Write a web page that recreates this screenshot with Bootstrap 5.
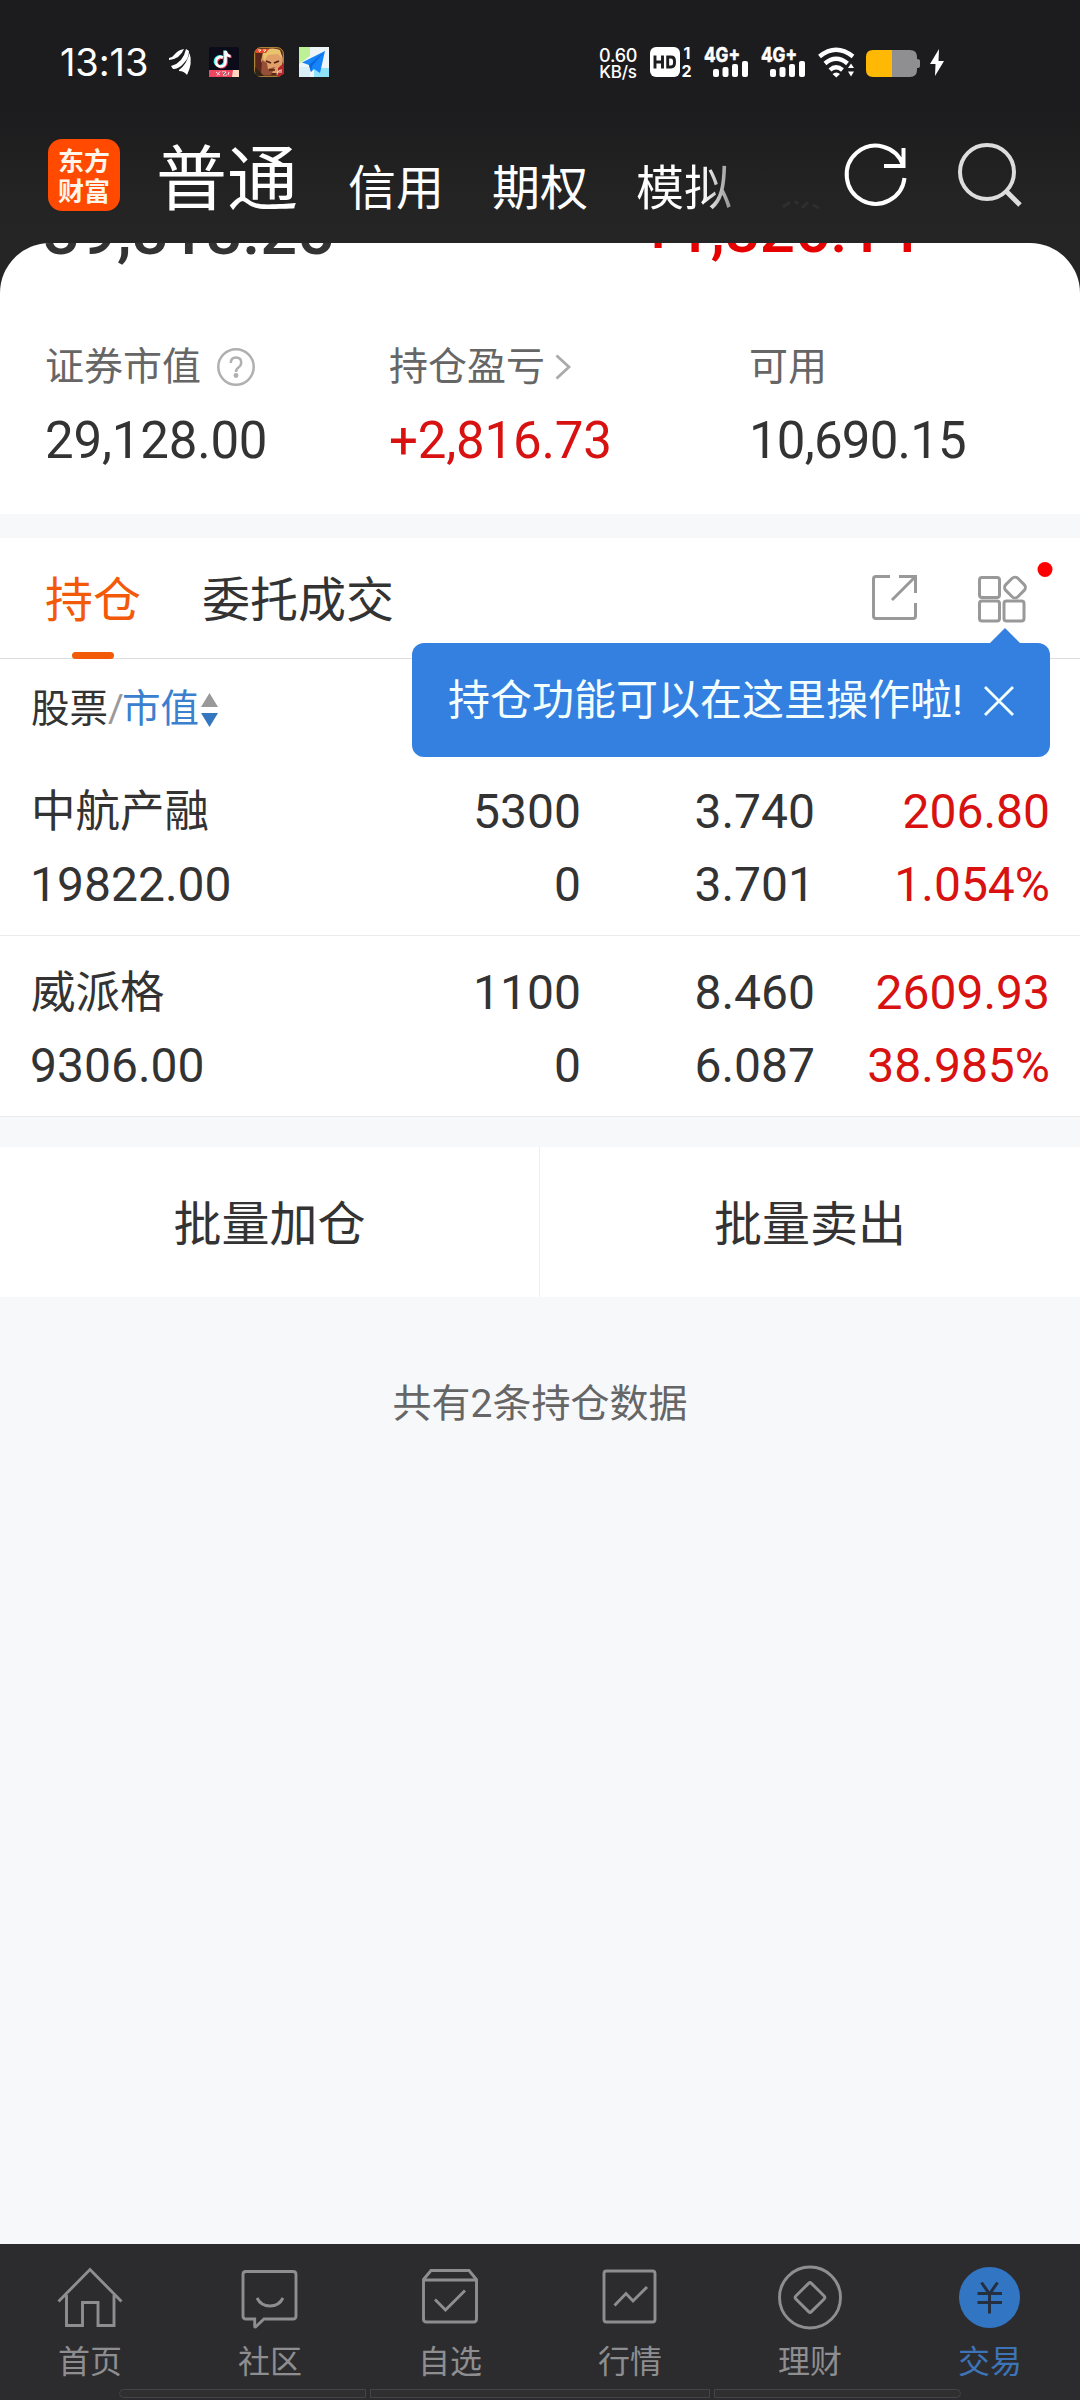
<!DOCTYPE html>
<html lang="zh-CN">
<head>
<meta charset="utf-8">
<meta name="viewport" content="width=device-width, initial-scale=1">
<title>交易 - 持仓</title>
<link href="https://cdn.jsdelivr.net/npm/bootstrap@5.3.0/dist/css/bootstrap.min.css" rel="stylesheet">
<style>
  body{width:1080px;height:2400px;overflow:hidden;background:#f7f8fa;color:#333;font-family:Roboto,"Noto Sans CJK SC",sans-serif;font-size:48px;line-height:1}
  svg{display:block;flex:none;overflow:visible}
  .app-top{height:243px;background:linear-gradient(#1c1c1e 0,#1c1c1e 110px,#232323 190px,#252525 243px);color:#fff}
  .status-row{height:88px;padding:37px 136px 0 60px}
  .clock{font:400 38px/50px Inter,sans-serif;letter-spacing:-.1px;width:109px}
  .net-speed{width:38px;font:500 17px/17px Inter,sans-serif;letter-spacing:-.2px;margin-right:13px}
  .net-speed div:first-child{font-size:18px}
  .title-row{height:155px;padding:0 58px 0 48px}
  .brand{width:72px;height:72px;border-radius:14px;background:#ff4a00;margin-top:51px;padding-top:6px;font:700 26px/30px "Noto Sans CJK SC",sans-serif;color:#fff5ea}
  .main-tab{font-size:71px;line-height:80px;margin:52px 0 0 36px;width:142px}
  .sub-tab{font-size:48px;line-height:60px;margin-top:71px;width:144px}
  .fade-out{background:linear-gradient(90deg,#fff 66px,#888 98px);-webkit-background-clip:text;background-clip:text;color:transparent}
  .sheet-wrap{background:#252525;height:271px}
  .sheet{height:271px;border-radius:50px 50px 0 0;overflow:hidden;background:#fff}
  .totals{height:61px;padding-left:43px;font-weight:500}
  .totals .asset{width:598px;font-size:65px;line-height:60px;margin-top:-41px}
  .totals .today{font-size:62px;line-height:60px;margin-top:-42px}
  .up{color:#d81111}.today{color:#e60000}
  .metric-label{font-size:39px;line-height:50px;color:#666;margin-top:38px;height:50px}
  .metric-value{font-size:51px;line-height:60px;margin-top:19px;letter-spacing:-.2px}
  .m1{width:344px}.m2{width:360px}
  .m3 .metric-value{letter-spacing:-.8px}
  .tabbar{margin-top:24px;height:121px;border-bottom:1px solid #ddd;padding:0 51px 0 45px}
  .tab-on{color:#f25a0a}
  .tab-on::after{content:"";position:absolute;left:27px;bottom:-1px;width:42px;height:7px;border-radius:4px;background:#f25a0a}
  .tab-item{line-height:126px;height:120px;margin-right:61px}
  .hint{top:643px;left:412px;width:638px;height:114px;border-radius:12px;background:#3480e1;color:#f3ffff;padding:2px 36px 0 36px;font-size:42px}
  .hint::before{content:"";position:absolute;top:-15px;left:578px;border:15px solid transparent;border-top:0;border-bottom-color:#3480e1}
  .head-row{height:96px;padding:5px 0 0 31px;font-size:38.500px}
  .slash{color:#999;margin-right:-2px}
  .hold-row{height:181px;border-bottom:1px solid #ebebeb;padding:20px 30px 0 30px;line-height:73px}
  .stock{font-size:44.500px;padding-left:1px;line-height:75px;height:73px}
  .c1{width:280px}.c2{width:271px}.c3{width:234px}.c4{width:235px}
  .batch{margin-top:30px;height:150px}
  .batch>div{padding-top:5px}
  .batch>div:first-child{border-right:1px solid #eee}
  .foot-note{color:#666;font-size:39px;line-height:60px;margin-top:77px}
  .bottom-nav{height:156px;background:#2c2c2e;color:#8e8e91;font-size:32px}
  .bottom-nav .tab-col{width:180px;padding-top:20px}
  .bottom-nav span{line-height:40px;margin-top:12px}
  .bottom-nav .now{color:#3d74b8}
  .grip{bottom:2px;left:119px;width:842px;gap:4px}
  .grip i{height:9px;flex:1;border:1px solid #434446;background:#2f2f30}
  .grip i:first-child{border-radius:5px 0 0 5px;flex:0 0 247px}.grip i:last-child{border-radius:0 5px 5px 0;flex:0 0 247px}
</style>
</head>
<body class="position-relative d-flex flex-column">
<header class="app-top">
  <div class="status-row d-flex justify-content-between">
    <div class="d-flex">
      <div class="clock">13:13</div>
      <svg width="22" height="26" viewBox="0 0 22 26" fill="#fff" style="margin-top:12px;margin-right:18px"><path d="M0 11Q11 10 15 0Q9 1 6 5Q4 8 0 9ZM2 17Q14 14 17 0L20 2Q20 9 15 14Q10 20 4 20ZM10 21Q18 15 20.500 4Q24 14 18 26Q15 22 10 22Z"/></svg>
      <svg width="30" height="30" viewBox="0 0 30 30" style="margin-top:10px;margin-right:15px"><rect width="30" height="30" rx="2" fill="#0c0b19"/><g fill="none" stroke-width="2.600"><path d="M14 10.500a4.800 4.800 0 1 0 2.500 4.400V4q1 5 5 5" stroke="#2af0ea" transform="translate(-1 -.5)"/><path d="M14 10.500a4.800 4.800 0 1 0 2.500 4.400V4q1 5 5 5" stroke="#f4435e" transform="translate(1 .7)"/><path d="M14 10.500a4.800 4.800 0 1 0 2.500 4.400V4q1 5 5 5" stroke="#fff"/></g><path d="M0 23h30v7H0z" fill="#ef4661"/><path d="M24 23h6v7h-7z" fill="#ffd7c0"/><path d="M7 25l4 3M11 24.500l-3 4M13 25h4l-3 3h4M20 25l-1 3" stroke="#ffe4e4"/></svg>
      <svg width="30" height="30" viewBox="0 0 30 30" style="margin-top:10px;margin-right:15px"><rect x=".7" y=".7" width="28.600" height="28.600" rx="6" fill="#582719" stroke="#c9983f"/><path d="M9 5q7-6 16-2l4 10-3 13H14L7 14z" fill="#e2a069"/><path d="M9 7q5-8 17-4l3 9-5-5-10 1-4 6z" fill="#e9c46f"/><path d="M8 13l5 3 1 6 7-2-4 8H7z" fill="#96503a"/><path d="M12 14l5 2M20 16l5-2M15 23h6" stroke="#512015" stroke-width="1.700"/><path d="M24 21l6-5v11l-6 3z" fill="#b3262a"/><path d="M2 2h13l-3 4H2z" fill="#e74b2b"/><path d="M4 3h3L5 5M9 3h3l-2 2M23 28q0-5 5-5M24 25h4" stroke="#ffe5c4" fill="none"/><path d="M1 20l9 9H5q-4 0-4-5z" fill="#302515"/></svg>
      <svg width="30" height="30" viewBox="0 0 30 30" style="margin-top:10px"><path d="M0 0h30v30H0z" fill="#eef5f9"/><path d="M0 0h11v9L0 17z" fill="#bdf195"/><path d="M15 21h15v9H15z" fill="#8ee2fa"/><path d="M0 20h11v10H0z" fill="#d9eff8"/><path d="M26 4L3 15.500l7 2.500 2 7 3-3 6 4z" fill="#1684f8"/><path d="M26 4L10 18l2 7 1-6z" fill="#0868dc"/></svg>
    </div>
    <div class="d-flex">
      <div class="net-speed text-center" style="margin-top:10px"><div>0.60</div><div>KB/s</div></div>
      <svg width="43" height="30" viewBox="0 0 43 30" style="margin-top:10px;margin-right:11px"><rect width="30" height="30" rx="6" fill="#fff"/><path d="M5 8.500v13M12.500 8.500v13M5 15h7.500M17.700 10h3.300q3.500 0 3.500 4v2q0 4-3.500 4h-3.300z" fill="none" stroke="#1c1c1e" stroke-width="2.900"/><g fill="#fff" font-family="Inter" font-weight="700" font-size="16"><text x="33.500" y="11.500">1</text><text x="31.500" y="30">2</text></g></svg>
      <svg width="44" height="30" viewBox="0 0 44 30" fill="#fff" stroke-width=".6" style="margin-top:10px;margin-right:13px"><text x="0" y="14.500" stroke="#fff" font-family="Inter" font-weight="700" font-size="20" textLength="36" lengthAdjust="spacingAndGlyphs">4G+</text><rect x="9" y="22" width="6" height="8" rx="2"/><rect x="18.500" y="20" width="6" height="10" rx="2"/><rect x="28" y="17" width="6" height="13" rx="2"/><rect x="38" y="14" width="6" height="16" rx="2"/></svg>
      <svg width="44" height="30" viewBox="0 0 44 30" fill="#fff" stroke-width=".6" style="margin-top:10px;margin-right:13px"><text x="0" y="14.500" stroke="#fff" font-family="Inter" font-weight="700" font-size="20" textLength="36" lengthAdjust="spacingAndGlyphs">4G+</text><rect x="9" y="22" width="6" height="8" rx="2"/><rect x="18.500" y="20" width="6" height="10" rx="2"/><rect x="28" y="17" width="6" height="13" rx="2"/><rect x="38" y="14" width="6" height="16" rx="2"/></svg>
      <svg width="37" height="30" viewBox="0 0 37 30" style="margin-top:10px;margin-right:11px"><g fill="none" stroke="#fff" stroke-width="4.400"><path d="M1.500 9.500q16.500-13.500 33.500 0"/><path d="M7 16.500q11-9.500 22.500 0"/><path d="M12 23q6-5.500 12.500 0"/></g><path d="M14.500 27q4-3 7.500 0l-3.700 3.500zM30 21l3-4.500 3 4.500zM30 24.500h6l-3 5z" fill="#fff"/></svg>
      <svg width="55" height="27" viewBox="0 0 55 27" style="margin-top:13px;margin-right:9px"><path d="M26 0h18q7 0 7 7v2q3 0 3 2v5q0 2-3 2v2q0 7-7 7H26z" fill="#8f8f91"/><path d="M26 0H7Q0 0 0 7v13q0 7 7 7h19z" fill="#ffb905"/></svg>
      <svg width="14" height="27" viewBox="0 0 14 27" style="margin-top:12px"><path d="M9 0L0 15h5.500L5 27l9-15H8.500z" fill="#fff"/></svg>
    </div>
  </div>
  <div class="title-row d-flex">
    <div class="brand text-center">东方<br>财富</div>
    <div class="main-tab">普通</div>
    <div class="d-flex" style="margin-left:50px">
      <div class="sub-tab">信用</div><div class="sub-tab">期权</div><div class="sub-tab fade-out">模拟</div>
    </div>
    <svg width="40" height="10" viewBox="0 0 40 10" style="margin:112px 22px 0 2px"><path d="M1 7l7-5M13 1l3 3M20 8l6-6M31 5l6 3" stroke="#2f2f30" stroke-width="3"/></svg>
    <svg width="64" height="64" viewBox="0 0 64 64" style="margin:57px 50px 0 0" fill="none" stroke="#fff" stroke-width="4"><path d="M59 20A29 29 0 1 0 60.500 33M59.500 3v19.500M40 21h21.500"/></svg>
    <svg width="64" height="66" viewBox="0 0 64 66" style="margin-top:55px" fill="none" stroke="#ddd" stroke-width="4"><circle cx="29" cy="29" r="27"/><path d="M48 48l14 14" stroke-width="5"/></svg>
  </div>
</header>

<section class="sheet-wrap">
  <div class="sheet">
    <div class="totals d-flex"><div class="asset">39,818.25</div><div class="today">+1,826.14</div></div>
    <div class="d-flex" style="padding-left:45px">
      <div class="m1"><div class="metric-label d-flex align-items-center">证券市值
        <svg width="40" height="40" viewBox="0 0 40 40" style="margin-left:15px" fill="none" stroke="#b0b0b0" stroke-width="2.500"><circle cx="20" cy="20" r="17.700"/><path d="M14.800 16q0-5.500 5.200-5.500t5.200 5q0 3-2.500 4.700Q20 22 20 25"/><circle cx="20" cy="28.500" r="1.200" fill="#b0b0b0"/></svg></div>
        <div class="metric-value">29,128.00</div></div>
      <div class="m2"><div class="metric-label d-flex align-items-center">持仓盈亏
        <svg width="16" height="26" viewBox="0 0 16 26" style="margin-left:10px" fill="none" stroke="#aaa" stroke-width="2.800"><path d="M1.500 1.500L14 13 1.500 24.500"/></svg></div>
        <div class="metric-value up">+2,816.73</div></div>
      <div class="m3"><div class="metric-label">可用</div><div class="metric-value">10,690.15</div></div>
    </div>
  </div>
</section>

<section class="tabbar bg-white d-flex">
  <div class="tab-item tab-on position-relative">持仓</div>
  <div class="tab-item me-auto">委托成交</div>
  <svg width="47" height="47" viewBox="0 0 47 47" style="margin:36px 60px 0 0" fill="none" stroke="#999" stroke-width="3"><path d="M19 2.500H5Q2.500 2.500 2.500 5v37q0 2.500 2.500 2.500h37q2.500 0 2.500-2.500V29M28 2.500h16.500V19M44 3L21 26"/></svg>
  <svg width="51" height="48" viewBox="1 0 51 48" fill="none" stroke="#999" stroke-width="3" style="margin-top:37px"><rect x="2.500" y="2.500" width="20" height="20" rx="2.500"/><rect x="2.500" y="26" width="20" height="20" rx="2.500"/><rect x="27" y="26" width="20" height="20" rx="2.500"/><rect x="29.500" y="4" width="17" height="17" rx="4" transform="rotate(45 38 12.500)"/><circle cx="68" cy="-5.500" r="7.500" fill="#f00" stroke="none"/></svg>
</section>

<section class="bg-white">
  <div class="head-row d-flex align-items-center"><span>股票</span><span class="slash">/</span><span style="color:#3b80cf">市值</span>
    <svg width="17" height="34" viewBox="0 0 17 34" style="margin-left:2px"><path d="M8.500 0L17 14H0z" fill="#999"/><path d="M0 20h17L8.500 34z" fill="#3576c0"/></svg>
  </div>
  <div class="hold-row">
    <div class="d-flex"><div class="c1 stock">中航产融</div><div class="c2 text-end">5300</div><div class="c3 text-end">3.740</div><div class="c4 text-end up">206.80</div></div>
    <div class="d-flex"><div class="c1">19822.00</div><div class="c2 text-end">0</div><div class="c3 text-end">3.701</div><div class="c4 text-end up">1.054%</div></div>
  </div>
  <div class="hold-row">
    <div class="d-flex"><div class="c1 stock">威派格</div><div class="c2 text-end">1100</div><div class="c3 text-end">8.460</div><div class="c4 text-end up">2609.93</div></div>
    <div class="d-flex"><div class="c1">9306.00</div><div class="c2 text-end">0</div><div class="c3 text-end">6.087</div><div class="c4 text-end up">38.985%</div></div>
  </div>
</section>

<section class="batch bg-white d-flex">
  <div class="w-50 d-flex align-items-center justify-content-center">批量加仓</div>
  <div class="w-50 d-flex align-items-center justify-content-center">批量卖出</div>
</section>
<div class="foot-note text-center">共有2条持仓数据</div>

<div class="hint position-absolute d-flex align-items-center justify-content-between"><span>持仓功能可以在这里操作啦!</span>
  <svg width="30" height="30" viewBox="0 0 30 30" stroke="#f3ffff" stroke-width="2.800"><path d="M1 1l28 28M29 1L1 29"/></svg>
</div>

<nav class="bottom-nav mt-auto d-flex position-relative">
  <div class="tab-col d-flex flex-column align-items-center"><svg width="66" height="66" viewBox="0 0 66 66" fill="none" stroke="#8e8e91" stroke-width="2.900"><path d="M1.500 37.500L33 5.500l31.500 32M9.500 31v30.500H25.500V38.500h15.500v23h16V31"/></svg><span>首页</span></div>
  <div class="tab-col d-flex flex-column align-items-center"><svg width="66" height="66" viewBox="0 0 66 66" fill="none" stroke="#8e8e91" stroke-width="2.900"><path d="M8 7.500h48q3 0 3 3V52q0 3-3 3H27l-8.500 8q-.8.300-.8-.7V55H9q-3 0-3-3V10.500q0-3 3-3M20 34q4 8 13 8t13-8"/></svg><span>社区</span></div>
  <div class="tab-col d-flex flex-column align-items-center"><svg width="66" height="66" viewBox="0 0 66 66" fill="none" stroke="#8e8e91" stroke-width="2.900"><path d="M6.500 15.500L14 6.500h38l7.500 9V55q0 3-3 3h-47q-3 0-3-3zM6.500 16h53M18 35.500L28.500 46 48 26.500"/></svg><span>自选</span></div>
  <div class="tab-col d-flex flex-column align-items-center"><svg width="66" height="66" viewBox="0 0 66 66" fill="none" stroke="#8e8e91" stroke-width="2.900"><rect x="7" y="7" width="51" height="51" rx="2.500"/><path d="M17.500 41.500L29 29.500l7 7.500L50 23"/></svg><span>行情</span></div>
  <div class="tab-col d-flex flex-column align-items-center"><svg width="66" height="66" viewBox="0 0 66 66" fill="none" stroke="#8e8e91" stroke-width="2.900"><circle cx="33" cy="33.500" r="30.500"/><rect x="22" y="22.500" width="22" height="22" rx="2" transform="rotate(45 33 33.500)"/></svg><span>理财</span></div>
  <div class="tab-col d-flex flex-column align-items-center now"><svg width="66" height="66" viewBox="0 0 66 66"><circle cx="32.500" cy="33.500" r="30.500" fill="#3275c2"/><path d="M24.500 18.500L32.500 30l8-11.500M20.500 29.500h24.500M20.500 38.500h24.500M32.500 29v20.500" fill="none" stroke="#24303f" stroke-width="3"/></svg><span>交易</span></div>
  <div class="grip position-absolute d-flex"><i></i><i></i><i></i></div>
</nav>
<script src="https://cdn.jsdelivr.net/npm/bootstrap@5.3.0/dist/js/bootstrap.bundle.min.js"></script>
</body>
</html>
